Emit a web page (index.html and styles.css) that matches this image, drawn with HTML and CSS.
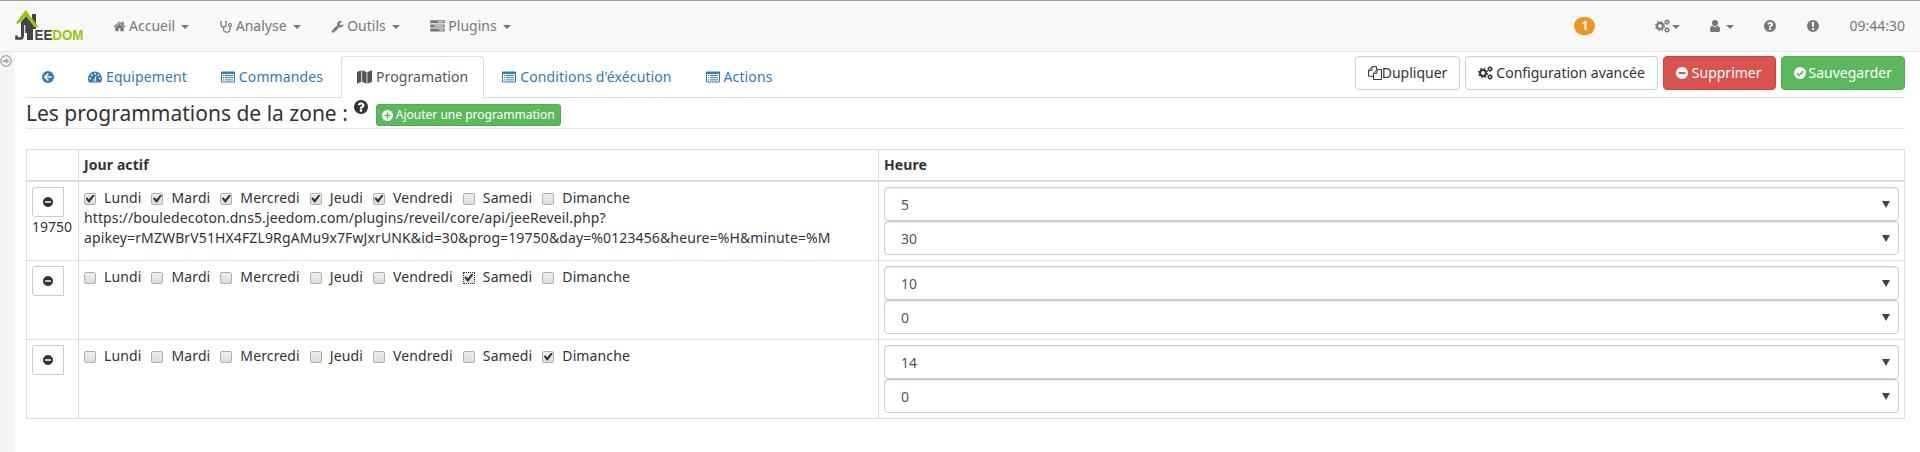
FILE: index.html
```html
<!DOCTYPE html>
<html lang="fr">
<head>
<meta charset="utf-8">
<title>Jeedom</title>
<link rel="stylesheet" href="styles.css">
</head>
<body>
<svg class="sprite" aria-hidden="true">
  <symbol id="home" viewBox="0 0 1792 1792"><path d="M1472 992v480q0 26-19 45t-45 19h-384v-384h-256v384h-384q-26 0-45-19t-19-45v-480q0-1 .5-3t.5-3l575-474 575 474q1 2 1 6zm223-69l-62 74q-8 9-21 11h-3q-13 0-21-7l-692-577-692 577q-12 8-24 7-13-2-21-11l-62-74q-8-10-7-23.5t11-21.5l719-599q32-26 76-26t76 26l244 204v-195q0-14 9-23t23-9h192q14 0 23 9t9 23v408l219 182q10 8 11 21.5t-7 23.5z"/></symbol>
  <symbol id="wrench" viewBox="0 0 1792 1792"><path d="M448 1472q0-26-19-45t-45-19-45 19-19 45 19 45 45 19 45-19 19-45zm644-420l-682 682q-37 37-90 37-52 0-91-37l-106-108q-38-36-38-90 0-53 38-91l681-681q39 98 114.5 173.5t173.5 114.5zm634-435q0 39-23 106-47 134-164.5 217.5t-258.5 83.5q-185 0-316.5-131.5t-131.5-316.5 131.5-316.5 316.5-131.5q58 0 121.5 16.5t107.5 46.5q16 11 16 28t-16 28l-293 169v224l193 107q5-3 79-48.5t135.5-81 70.5-35.5q15 0 23.5 10t8.5 25z"/></symbol>
  <symbol id="help" viewBox="128 128 1536 1536"><path d="M1024 1376v-192q0-14-9-23t-23-9h-192q-14 0-23 9t-9 23v192q0 14 9 23t23 9h192q14 0 23-9t9-23zm256-672q0-88-55.5-163t-138.5-116-170-41q-243 0-371 213-15 24 8 42l132 100q7 6 19 6 16 0 25-12 53-68 86-92 34-24 86-24 48 0 85.5 26t37.5 59q0 38-20 61t-68 45q-63 28-115.5 86.5t-52.5 125.5v36q0 14 9 23t23 9h192q14 0 23-9t9-23q0-19 21.5-49.5t54.5-49.5q32-18 49-28.5t46-35 44.5-48 28-60.5 12.5-81zm384 192q0 209-103 385.5t-279.5 279.5-385.5 103-385.5-103-279.5-279.5-103-385.5 103-385.5 279.5-279.5 385.5-103 385.5 103 279.5 279.5 103 385.5z"/></symbol>
  <symbol id="minus" viewBox="128 128 1536 1536"><path d="M1344 960v-128q0-26-19-45t-45-19h-768q-26 0-45 19t-19 45v128q0 26 19 45t45 19h768q26 0 45-19t19-45zm320-64q0 209-103 385.5t-279.5 279.5-385.5 103-385.5-103-279.5-279.5-103-385.5 103-385.5 279.5-279.5 385.5-103 385.5 103 279.5 279.5 103 385.5z"/></symbol>
  <symbol id="stetho" viewBox="0 0 14 14"><path d="M2.200 1.600H1v3.200a2.800 2.800 0 0 0 5.600 0V1.600H5.400M3.800 7.600v2a3.200 3.200 0 0 0 6.900 0V7" fill="none" stroke="currentColor" stroke-width="1.300"/><circle cx="10.800" cy="5.300" r="1.600" fill="none" stroke="currentColor" stroke-width="1.200"/></symbol>
  <symbol id="tasks" viewBox="0 0 15 12"><path d="M.2.300h14.600v3H.2zM.2 4.400h14.600v3H.2zM.2 8.500h14.600v3H.2z"/><path d="M8 1.800h5.400M4.500 5.900h8.900M9.500 10h3.900" stroke="#f8f8f8" stroke-width="1"/></symbol>
  <symbol id="cogs" viewBox="0 0 15 14"><g fill="none" stroke="currentColor"><circle cx="5" cy="7" r="2.900" stroke-width="2"/><circle cx="5" cy="7" r="4.400" stroke-width="1.300" stroke-dasharray="1.750 1.706"/><circle cx="12" cy="3.100" r="1.600" stroke-width="1.300"/><circle cx="12" cy="3.100" r="2.500" stroke-width=".8" stroke-dasharray="1 .963"/><circle cx="12" cy="10.900" r="1.600" stroke-width="1.300"/><circle cx="12" cy="10.900" r="2.500" stroke-width=".8" stroke-dasharray="1 .963"/></g></symbol>
  <symbol id="user" viewBox="0 0 10 12"><path d="M5 0a3 3 0 0 1 3 3.100C8 5 6.700 6.400 5 6.400S2 5 2 3.100A3 3 0 0 1 5 0zM2.300 5.800C3.800 7.600 6.200 7.600 7.700 5.800 9.300 6 10 7.600 10 9.900 10 11.200 9.300 12 8.200 12H1.800C.7 12 0 11.200 0 9.900 0 7.600.7 6 2.300 5.800z"/></symbol>
  <symbol id="excl" viewBox="0 0 12 12"><path fill-rule="evenodd" d="M6 0a6 6 0 1 1 0 12A6 6 0 0 1 6 0zM4.900 2l.3 5h1.600l.3-5zM5 8v2h2V8z"/></symbol>
  <symbol id="back" viewBox="0 0 12 12"><circle cx="6" cy="6" r="6"/><path d="M6.300 2.500L2.800 6l3.500 3.500M3 6h6.500" fill="none" stroke="#fff" stroke-width="1.600"/></symbol>
  <symbol id="dash" viewBox="0 0 14 12"><path d="M7 .6a7 7 0 0 1 5.900 10.700q-.2.300-.6.300H1.700q-.4 0-.6-.3A7 7 0 0 1 7 .6z"/><g fill="#fff"><circle cx="2.200" cy="7.500" r=".9"/><circle cx="3.700" cy="4.200" r=".9"/><circle cx="7" cy="2.700" r=".9"/><circle cx="10.300" cy="4.200" r=".9"/><circle cx="11.800" cy="7.500" r=".9"/><circle cx="6.800" cy="9.100" r="1.500"/></g><path d="M7 9l1-4" stroke="#fff" stroke-width=".9"/><circle cx="6.800" cy="9.100" r=".8"/></symbol>
  <symbol id="list" viewBox="0 0 14 12"><path fill-rule="evenodd" d="M1 .5h12q1 0 1 1v9q0 1-1 1H1q-1 0-1-1v-9q0-1 1-1zM1 3v7.500h12V3z"/><path d="M2 4.500h1M4 4.500h8M2 6.700h1M4 6.700h8M2 8.900h1M4 8.900h8" stroke="currentColor" stroke-width="1"/></symbol>
  <symbol id="map" viewBox="0 0 15 14"><path d="M0 2L4.300.2v11.600L0 13.800zM5.100.2L9.600 2v11.800l-4.500-2zM10.400 2L15 .2v11.600l-4.600 2z"/></symbol>
  <symbol id="plus" viewBox="0 0 12 12"><circle cx="6" cy="6" r="6"/><path d="M6 2.700v6.600M2.700 6h6.600" stroke="#5cb85c" stroke-width="1.700"/></symbol>
  <symbol id="check" viewBox="0 0 12 12"><circle cx="6" cy="6" r="6"/><path d="M2.800 6l2.400 2.300 4.100-4.200" fill="none" stroke="#5cb85c" stroke-width="1.700"/></symbol>
  <symbol id="copy" viewBox="0 0 14 14"><path d="M5.500 10.300H.5V4.300L4 .6h4.500v3M.6 4.300H4V.8M9 3.600h4.500v9.900h-8V7.200L9 3.600v3.600H5.700" fill="none" stroke="currentColor" stroke-width="1"/></symbol>
  <symbol id="arrow" viewBox="0 0 12 12"><circle cx="6" cy="6" r="5.200" fill="none" stroke="currentColor" stroke-width="1.400"/><path d="M2.800 5h3V3l3.600 3-3.600 3V7h-3z"/></symbol>
</svg>

<header class="navbar">
  <svg class="logo" viewBox="0 0 70 32">
    <path d="M6 12l5-6 7 7v17h-6v-7H9v3H6z" fill="#444"/>
    <path d="M17 4h4v15h-4z" fill="#444"/>
    <path d="M7.500 14v12.500q0 2-2 2H1.500v-3" fill="none" stroke="#444" stroke-width="2.600"/>
    <path d="M9.700 15v10.500" stroke="#f8f8f8" stroke-width="1.100"/>
    <path d="M.5 13.500L10.700 0l12.800 17h-4.300L10.700 5.800 4.300 13.500z" fill="#93c90f"/>
    <text x="19.500" y="30" textLength="49" lengthAdjust="spacingAndGlyphs" class="brand"><tspan fill="#444">EE</tspan><tspan fill="#93c90f">DOM</tspan></text>
  </svg>
  <nav class="menu">
    <a><svg class="i13"><use href="#home"/></svg>Accueil<b class="caret"></b></a>
    <a><svg class="i13"><use href="#stetho"/></svg>Analyse<b class="caret"></b></a>
    <a><svg class="i13"><use href="#wrench"/></svg>Outils<b class="caret"></b></a>
    <a><svg class="i15"><use href="#tasks"/></svg>Plugins<b class="caret"></b></a>
  </nav>
  <div class="status">
    <span class="badge">1</span>
    <a class="tools"><svg class="i15"><use href="#cogs"/></svg><b class="caret tight"></b></a>
    <a class="account"><svg class="i10"><use href="#user"/></svg><b class="caret"></b></a>
    <a class="info"><svg class="i12"><use href="#help"/></svg></a>
    <a class="warn"><svg class="i12"><use href="#excl"/></svg></a>
    <span class="clock">09:44:30</span>
  </div>
</header>

<div class="page">
  <aside class="side"><svg class="i12"><use href="#arrow"/></svg></aside>
  <main class="content">
    <div class="topbar">
      <nav class="tabs">
        <a><svg class="i12"><use href="#back"/></svg></a>
        <a><svg class="i14"><use href="#dash"/></svg>Equipement</a>
        <a><svg class="i14"><use href="#list"/></svg>Commandes</a>
        <a class="active"><svg class="i15"><use href="#map"/></svg>Programation</a>
        <a><svg class="i14"><use href="#list"/></svg>Conditions d'éxécution</a>
        <a><svg class="i14"><use href="#list"/></svg>Actions</a>
      </nav>
      <div class="actions">
        <button class="btn flush"><svg class="i14"><use href="#copy"/></svg>Dupliquer</button>
        <button class="btn"><svg class="i15"><use href="#cogs"/></svg>Configuration avancée</button>
        <button class="btn danger"><svg class="i12"><use href="#minus"/></svg>Supprimer</button>
        <button class="btn success"><svg class="i12"><use href="#check"/></svg>Sauvegarder</button>
      </div>
    </div>
    <div class="legend">
      <span class="title">Les programmations de la zone :</span>
      <svg class="hint"><use href="#help"/></svg>
      <button class="btn success small"><svg class="i11"><use href="#plus"/></svg>Ajouter une programmation</button>
    </div>
    <table class="grid">
      <colgroup><col class="c1"><col class="c2"><col></colgroup>
      <thead><tr><th></th><th>Jour actif</th><th>Heure</th></tr></thead>
      <tbody>
        <tr>
          <td><button class="remove"><svg class="i10 round"><use href="#minus"/></svg></button><div>19750</div></td>
          <td>
            <div class="days"><label><input type="checkbox" checked>Lundi</label><label><input type="checkbox" checked>Mardi</label><label><input type="checkbox" checked>Mercredi</label><label><input type="checkbox" checked>Jeudi</label><label><input type="checkbox" checked>Vendredi</label><label><input type="checkbox">Samedi</label><label><input type="checkbox">Dimanche</label></div>
            <div class="url">https://bouledecoton.dns5.jeedom.com/plugins/reveil/core/api/jeeReveil.php?<br>apikey=rMZWBrV51HX4FZL9RgAMu9x7FwJxrUNK&amp;id=30&amp;prog=19750&amp;day=%0123456&amp;heure=%H&amp;minute=%M</div>
          </td>
          <td><div class="select">5</div><div class="select">30</div></td>
        </tr>
        <tr>
          <td><button class="remove"><svg class="i10 round"><use href="#minus"/></svg></button></td>
          <td>
            <div class="days"><label><input type="checkbox">Lundi</label><label><input type="checkbox">Mardi</label><label><input type="checkbox">Mercredi</label><label><input type="checkbox">Jeudi</label><label><input type="checkbox">Vendredi</label><label><input type="checkbox" class="focused" checked>Samedi</label><label><input type="checkbox">Dimanche</label></div>
          </td>
          <td><div class="select">10</div><div class="select">0</div></td>
        </tr>
        <tr>
          <td><button class="remove"><svg class="i10 round"><use href="#minus"/></svg></button></td>
          <td>
            <div class="days"><label><input type="checkbox">Lundi</label><label><input type="checkbox">Mardi</label><label><input type="checkbox">Mercredi</label><label><input type="checkbox">Jeudi</label><label><input type="checkbox">Vendredi</label><label><input type="checkbox">Samedi</label><label><input type="checkbox" checked>Dimanche</label></div>
          </td>
          <td><div class="select">14</div><div class="select">0</div></td>
        </tr>
      </tbody>
    </table>
  </main>
</div>
</body>
</html>
```

FILE: styles.css
```css
* { box-sizing: border-box; }
html, body { height: 100%; }
body { margin: 0; display: flex; flex-direction: column; overflow: hidden; background: #fff; color: #333; font: 14px/20px "Noto Sans", sans-serif; }
svg { fill: currentColor; flex: none; }
.sprite { display: none; }
.i10 { width: 10px; height: 12px; }
.i10.round { height: 10px; }
.i11 { width: 11px; height: 11px; }
.i12 { width: 12px; height: 12px; }
.i13 { width: 13px; height: 13px; }
.i14 { width: 14px; height: 14px; }
.i15 { width: 15px; height: 14px; }

.navbar { display: flex; align-items: center; height: 52px; flex: none; background: #f8f8f8; border-top: 1px solid #a5a3a5; border-bottom: 1px solid #e7e7e7; color: #777; padding: 0 15px; }
.logo { width: 70px; height: 32px; }
.brand { font: bold 14.500px "Liberation Sans", sans-serif; }
.menu { display: flex; gap: 30.600px; margin-left: 28px; }
.menu a { display: flex; align-items: center; }
.menu svg { margin-right: 3px; }
.caret { width: 8px; border: 4px solid transparent; border-top-color: currentColor; border-bottom: 0; margin-left: 6px; margin-top: 2px; }
.caret.tight { margin-left: 2px; }
.status { display: flex; align-items: center; margin-left: auto; }
.status a { display: flex; align-items: center; }
.badge { width: 21px; height: 18px; margin-right: 60px; border-radius: 9px; background: #ec971f; color: #fff; font-size: 12px; font-weight: 700; line-height: 17px; text-align: center; }
.tools { margin-right: 30px; }
.account { margin-right: 30px; }
.info { margin-right: 31px; }
.warn { margin-right: 30px; }

.page { display: flex; flex: 1; }
.side { width: 15px; background: #f5f5f5; color: #aaa; padding-top: 3px; }
.side svg { display: block; }
.content { flex: 1; padding: 4px 15px 0 11px; }
.topbar { display: flex; justify-content: space-between; align-items: flex-start; height: 42px; border-bottom: 1px solid #ddd; }
.tabs { display: flex; gap: 2px; color: #337ab7; letter-spacing: .1px; }
.tabs a { display: flex; align-items: center; height: 42px; padding: 0 15px; border: 1px solid transparent; border-radius: 4px 4px 0 0; }
.tabs svg { margin-right: 4px; }
.tabs a:first-child svg { margin-right: 0; }
.tabs .active { color: #555; background: #fff; border-color: #ddd; border-bottom-color: #fff; }
.actions { display: flex; gap: 5px; }
.btn { display: flex; align-items: center; gap: 3px; height: 34px; padding: 0 12px; background: #fff; color: #333; border: 1px solid #ccc; border-radius: 4px; font: inherit; white-space: nowrap; }
.flush { gap: 0; }
.danger { gap: 4px; padding-right: 13px; background: #d9534f; border-color: #d43f3a; color: #fff; }
.success { background: #5cb85c; border-color: #4cae4c; color: #fff; }
.small { height: 22px; padding: 0 5px; font-size: 12px; border-radius: 3px; margin: 6px 0 0 8px; }
.legend { display: flex; align-items: flex-start; height: 31px; margin-bottom: 20px; border-bottom: 1px solid #e5e5e5; }
.title { font-size: 21px; line-height: 30px; }
.hint { width: 14px; height: 14px; margin: 2px 0 0 6px; }

.grid { width: 100%; table-layout: fixed; border-spacing: 0; border-right: 1px solid #ddd; border-bottom: 1px solid #ddd; }
.c1 { width: 52px; }
.c2 { width: 800px; }
th, td { padding: 5px; border-left: 1px solid #ddd; border-top: 1px solid #ddd; text-align: left; vertical-align: top; }
th { height: 33px; border-bottom: 2px solid #ddd; letter-spacing: .1px; }
td { height: 79px; }
tbody tr:first-child td { border-top: 0; height: 78px; }
.remove { display: flex; align-items: center; justify-content: center; width: 32px; height: 30px; padding: 0; background: #fff; color: #333; border: 1px solid #ccc; border-radius: 3px 0 0 3px; }
.days { display: flex; gap: 10px; height: 21px; letter-spacing: .12px; }
.days label { display: flex; align-items: center; gap: 8px; }
.days input { appearance: none; flex: none; display: grid; place-items: center; width: 12px; height: 12px; margin: 2px 0 0; border: 1px solid #b0b0b0; border-radius: 2px; background: linear-gradient(#eee, #dcdcdc); }
.days input:checked::after { content: ""; width: 9px; height: 8px; background: #333; clip-path: polygon(0 50%, 18% 35%, 38% 62%, 82% 0, 100% 14%, 44% 100%, 34% 100%); }
.days .focused { border: 1px dotted #333; border-radius: 0; }
.url { letter-spacing: .12px; }
.select { display: flex; align-items: center; justify-content: space-between; height: 34px; padding: 1px 8px 0 16px; border: 1px solid #ccc; border-radius: 4px; color: #555; box-shadow: inset 0 1px 1px rgba(0,0,0,.075); }
.select::after { content: ""; width: 0; border: 4px solid transparent; border-top: 7px solid #444; border-bottom: 0; }
```
